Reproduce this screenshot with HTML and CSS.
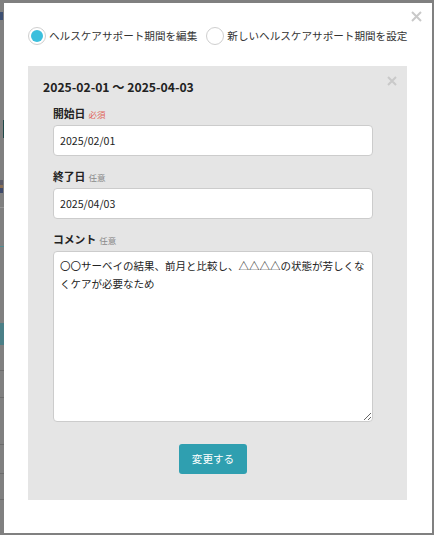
FILE: index.html
```html
<!DOCTYPE html>
<html lang="ja">
<head>
<meta charset="utf-8">
<title>ヘルスケアサポート期間</title>
<link rel="stylesheet" href="styles.css">
</head>
<body>
<div class="backdrop">
  <div class="bk-gap" style="height:10px"></div>
  <div class="bk-frag bk-blue"></div>
  <div class="bk-gap" style="height:98px"></div>
  <div class="bk-vert"></div>
  <div class="bk-gap" style="height:42px"></div>
  <div class="bk-frag bk-dark"></div>
  <div class="bk-gap" style="height:11px"></div>
  <div class="bk-line bk-light"></div>
  <div class="bk-gap" style="height:38px"></div>
  <div class="bk-line bk-teal"></div>
  <div class="bk-gap" style="height:76px"></div>
  <div class="bk-block"></div>
  <div class="bk-gap" style="height:25px"></div>
  <div class="bk-line"></div>
  <div class="bk-gap" style="height:26px"></div>
  <div class="bk-line"></div>
  <div class="bk-gap" style="height:46px"></div>
  <div class="bk-line"></div>
  <div class="bk-gap" style="height:28px"></div>
  <div class="bk-line"></div>
  <div class="bk-gap" style="height:25px"></div>
  <div class="bk-line"></div>
</div>

<div class="modal">
  <button class="modal-close" aria-label="閉じる">
    <svg width="11" height="11" viewBox="0 0 11 11"><path d="M1 1L10 10M10 1L1 10" stroke="#c9c9c9" stroke-width="2" fill="none"/></svg>
  </button>
  <div class="radio-row">
    <label class="radio-opt"><span class="radio checked"></span><span>ヘルスケアサポート期間を編集</span></label>
    <label class="radio-opt second"><span class="radio"></span><span>新しいヘルスケアサポート期間を設定</span></label>
  </div>
  <div class="panel">
    <button class="panel-close" aria-label="閉じる">
      <svg width="10" height="10" viewBox="0 0 10 10"><path d="M1 1L9 9M9 1L1 9" stroke="#c9c9c9" stroke-width="2" fill="none"/></svg>
    </button>
    <div class="panel-title">2025-02-01 ～ 2025-04-03</div>
    <div class="form">
      <div class="field">
        <div class="label">開始日<span class="badge req">必須</span></div>
        <input class="input" type="text" value="2025/02/01">
      </div>
      <div class="field">
        <div class="label">終了日<span class="badge opt">任意</span></div>
        <input class="input" type="text" value="2025/04/03">
      </div>
      <div class="field">
        <div class="label">コメント<span class="badge opt">任意</span></div>
        <textarea class="textarea">〇〇サーベイの結果、前月と比較し、△△△△の状態が芳しくなくケアが必要なため</textarea>
      </div>
      <div class="actions">
        <button class="submit">変更する</button>
      </div>
    </div>
  </div>
</div>
</body>
</html>
```

FILE: styles.css
```css
* { box-sizing: border-box; }
html, body { margin: 0; height: 100%; }
body {
  background: #808080;
  font-family: "Noto Sans CJK JP", "Noto Sans", sans-serif;
  overflow: hidden;
}

.backdrop {
  width: 4px;
  display: flex;
  flex-direction: column;
  overflow: hidden;
}
.bk-gap { flex: none; }
.bk-frag { height: 12px; width: 3px; }
.bk-blue { background: linear-gradient(#808080 20%, #3d4f72 20%, #3d4f72 80%, #808080 80%); }
.bk-dark { height: 16px; background: linear-gradient(#5a5a66 0 30%, #8a6f55 30% 50%, #3f4a6a 50% 80%, #808080 80%); }
.bk-vert { height: 18px; width: 1px; margin-left: 3px; background: #1f4848; }
.bk-line { height: 1px; background: #6c6c6c; }
.bk-light { background: #959595; }
.bk-teal { background: #4f8c92; }
.bk-block { height: 22px; background: #4b7f87; }

.modal {
  position: fixed;
  left: 4px;
  top: 3px;
  width: 428px;
  height: 530px;
  background: #fff;
  padding: 24px 25px 0 24px;
}
.modal-close {
  position: absolute;
  right: 10px;
  top: 8px;
  width: 11px;
  height: 11px;
  padding: 0;
  border: 0;
  background: none;
  display: flex;
}
.radio-row {
  display: flex;
  align-items: center;
  height: 18px;
  font-size: 10.6px;
  color: #333;
}
.radio-opt {
  display: flex;
  align-items: center;
  gap: 3px;
  line-height: 18px;
  white-space: nowrap;
}
.radio-opt.second { margin-left: 9px; }
.radio {
  width: 18px;
  height: 18px;
  border: 1px solid #cfcfcf;
  border-radius: 50%;
  background: #fff;
  flex: none;
  display: flex;
  align-items: center;
  justify-content: center;
}
.radio.checked::after {
  content: "";
  width: 12px;
  height: 12px;
  border-radius: 50%;
  background: #3bbfdd;
}

.panel {
  position: relative;
  margin-top: 21px;
  width: 379px;
  height: 434px;
  background: #e5e5e5;
  padding: 12px 15px;
}
.panel-close {
  position: absolute;
  left: 359px;
  top: 10px;
  width: 10px;
  height: 10px;
  padding: 0;
  border: 0;
  background: none;
  display: flex;
}
.panel-title {
  font-size: 12.2px;
  font-weight: bold;
  line-height: 18px;
  color: #222;
  margin-bottom: 9px;
}
.form {
  margin-left: 10px;
  width: 320px;
  display: flex;
  flex-direction: column;
}
.field {
  display: flex;
  flex-direction: column;
  margin-bottom: 12px;
}
.label {
  height: 17px;
  line-height: 17px;
  font-size: 10.8px;
  font-weight: bold;
  color: #222;
  margin-bottom: 3px;
  display: flex;
  align-items: baseline;
}
.badge {
  font-size: 8.5px;
  font-weight: normal;
  margin-left: 3px;
}
.req { color: #e0665c; }
.opt { color: #8a8a8a; }
.input {
  height: 31px;
  border: 1px solid #ccc;
  border-radius: 4px;
  padding: 0 6px;
  font-family: inherit;
  font-size: 10.6px;
  color: #222;
  background: #fff;
  outline: none;
}
.textarea {
  height: 171px;
  border: 1px solid #ccc;
  border-radius: 4px;
  padding: 5px 2px 5px 6px;
  font-family: inherit;
  font-size: 10.5px;
  line-height: 18px;
  color: #222;
  background: #fff;
  resize: vertical;
  outline: none;
}
.actions {
  display: flex;
  justify-content: center;
  margin-top: 10px;
}
.submit {
  height: 30px;
  padding: 0 13px;
  border: 0;
  border-radius: 3px;
  background: #2f9fb0;
  color: #fff;
  font-family: inherit;
  font-size: 10.6px;
  line-height: 30px;
}
```
